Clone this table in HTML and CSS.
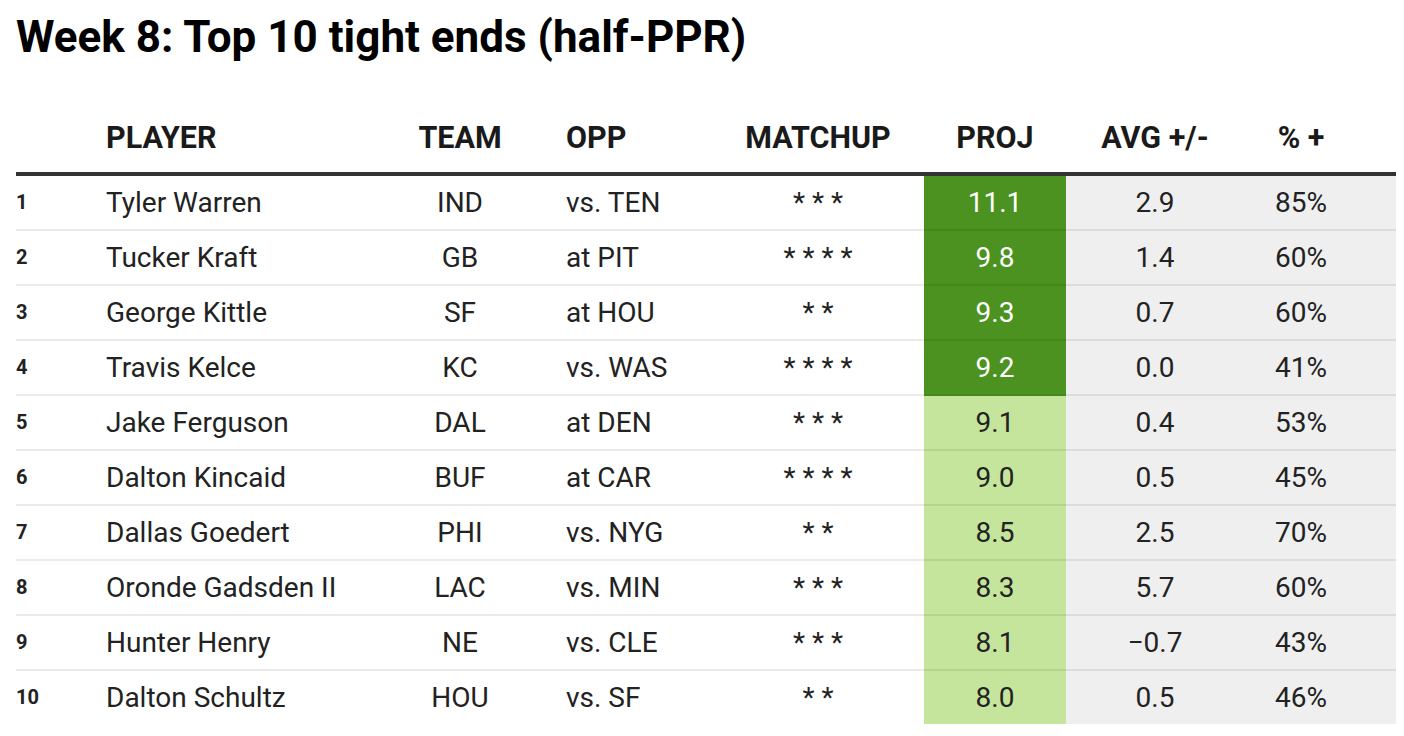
FILE: index.html
```html
<!DOCTYPE html>
<html lang="en">
<head>
<meta charset="utf-8">
<title>Week 8: Top 10 tight ends (half-PPR)</title>
<link rel="stylesheet" href="styles.css">
</head>
<body>
<h1 class="title">Week 8: Top 10 tight ends (half-PPR)</h1>
<table class="rank-table">
  <colgroup>
    <col class="c-rank"><col class="c-player"><col class="c-team"><col class="c-opp"><col class="c-match"><col class="c-proj"><col class="c-avg"><col class="c-pct">
  </colgroup>
  <thead>
    <tr>
      <th class="rank"></th>
      <th class="player">PLAYER</th>
      <th class="center">TEAM</th>
      <th class="opp">OPP</th>
      <th class="center">MATCHUP</th>
      <th class="center">PROJ</th>
      <th class="center">AVG +/-</th>
      <th class="center pct">% +</th>
    </tr>
  </thead>
  <tbody>
    <tr><td class="rank">1</td><td class="player">Tyler Warren</td><td class="center">IND</td><td class="opp">vs. TEN</td><td class="center stars">* * *</td><td class="center proj hi">11.1</td><td class="center stat">2.9</td><td class="center stat pct">85%</td></tr>
    <tr><td class="rank">2</td><td class="player">Tucker Kraft</td><td class="center">GB</td><td class="opp">at PIT</td><td class="center stars">* * * *</td><td class="center proj hi">9.8</td><td class="center stat">1.4</td><td class="center stat pct">60%</td></tr>
    <tr><td class="rank">3</td><td class="player">George Kittle</td><td class="center">SF</td><td class="opp">at HOU</td><td class="center stars">* *</td><td class="center proj hi">9.3</td><td class="center stat">0.7</td><td class="center stat pct">60%</td></tr>
    <tr><td class="rank">4</td><td class="player">Travis Kelce</td><td class="center">KC</td><td class="opp">vs. WAS</td><td class="center stars">* * * *</td><td class="center proj hi">9.2</td><td class="center stat">0.0</td><td class="center stat pct">41%</td></tr>
    <tr><td class="rank">5</td><td class="player">Jake Ferguson</td><td class="center">DAL</td><td class="opp">at DEN</td><td class="center stars">* * *</td><td class="center proj lo">9.1</td><td class="center stat">0.4</td><td class="center stat pct">53%</td></tr>
    <tr><td class="rank">6</td><td class="player">Dalton Kincaid</td><td class="center">BUF</td><td class="opp">at CAR</td><td class="center stars">* * * *</td><td class="center proj lo">9.0</td><td class="center stat">0.5</td><td class="center stat pct">45%</td></tr>
    <tr><td class="rank">7</td><td class="player">Dallas Goedert</td><td class="center">PHI</td><td class="opp">vs. NYG</td><td class="center stars">* *</td><td class="center proj lo">8.5</td><td class="center stat">2.5</td><td class="center stat pct">70%</td></tr>
    <tr><td class="rank">8</td><td class="player">Oronde Gadsden II</td><td class="center">LAC</td><td class="opp">vs. MIN</td><td class="center stars">* * *</td><td class="center proj lo">8.3</td><td class="center stat">5.7</td><td class="center stat pct">60%</td></tr>
    <tr><td class="rank">9</td><td class="player">Hunter Henry</td><td class="center">NE</td><td class="opp">vs. CLE</td><td class="center stars">* * *</td><td class="center proj lo">8.1</td><td class="center stat">−0.7</td><td class="center stat pct">43%</td></tr>
    <tr><td class="rank">10</td><td class="player">Dalton Schultz</td><td class="center">HOU</td><td class="opp">vs. SF</td><td class="center stars">* *</td><td class="center proj lo">8.0</td><td class="center stat">0.5</td><td class="center stat pct">46%</td></tr>
  </tbody>
</table>
</body>
</html>
```

FILE: styles.css
```css
html, body {
  margin: 0;
  padding: 0;
  background: #ffffff;
}

body {
  padding: 0 16px;
  font-family: Roboto, "Liberation Sans", Arial, sans-serif;
  color: #222222;
}

.title {
  margin: 11px 0 0 0;
  font-size: 44px;
  line-height: 52px;
  font-weight: 700;
  color: #000000;
}

.rank-table {
  width: 1380px;
  table-layout: fixed;
  border-collapse: separate;
  border-spacing: 0;
}

.c-rank { width: 90px; }
.c-player { width: 274px; }
.c-team { width: 160px; }
.c-opp { width: 172px; }
.c-match { width: 212px; }
.c-proj { width: 142px; }
.c-avg { width: 178px; }
.c-pct { width: 152px; }

.rank-table th {
  padding: 57px 0 16px 0;
  font-size: 30.5px;
  line-height: 36px;
  font-weight: 700;
  color: #1a1a1a;
  text-align: left;
  vertical-align: bottom;
  border-bottom: 4px solid #333333;
  white-space: nowrap;
}

.rank-table td {
  height: 53px;
  padding: 0;
  font-size: 28px;
  line-height: 53px;
  vertical-align: middle;
  border-bottom: 2px solid rgba(0, 0, 0, 0.08);
  white-space: nowrap;
}

.rank-table tbody tr:last-child td {
  border-bottom: none;
}

.rank-table td.rank {
  font-size: 20px;
  font-weight: 700;
}

.rank-table .center {
  text-align: center;
}

.rank-table .opp {
  padding-left: 26px;
}

.rank-table .pct {
  padding-right: 38px;
}

.proj.hi {
  background: #4c9220;
  color: #ffffff;
}

.proj.lo {
  background: #c5e49c;
}

.stat {
  background: #efefef;
}
```
